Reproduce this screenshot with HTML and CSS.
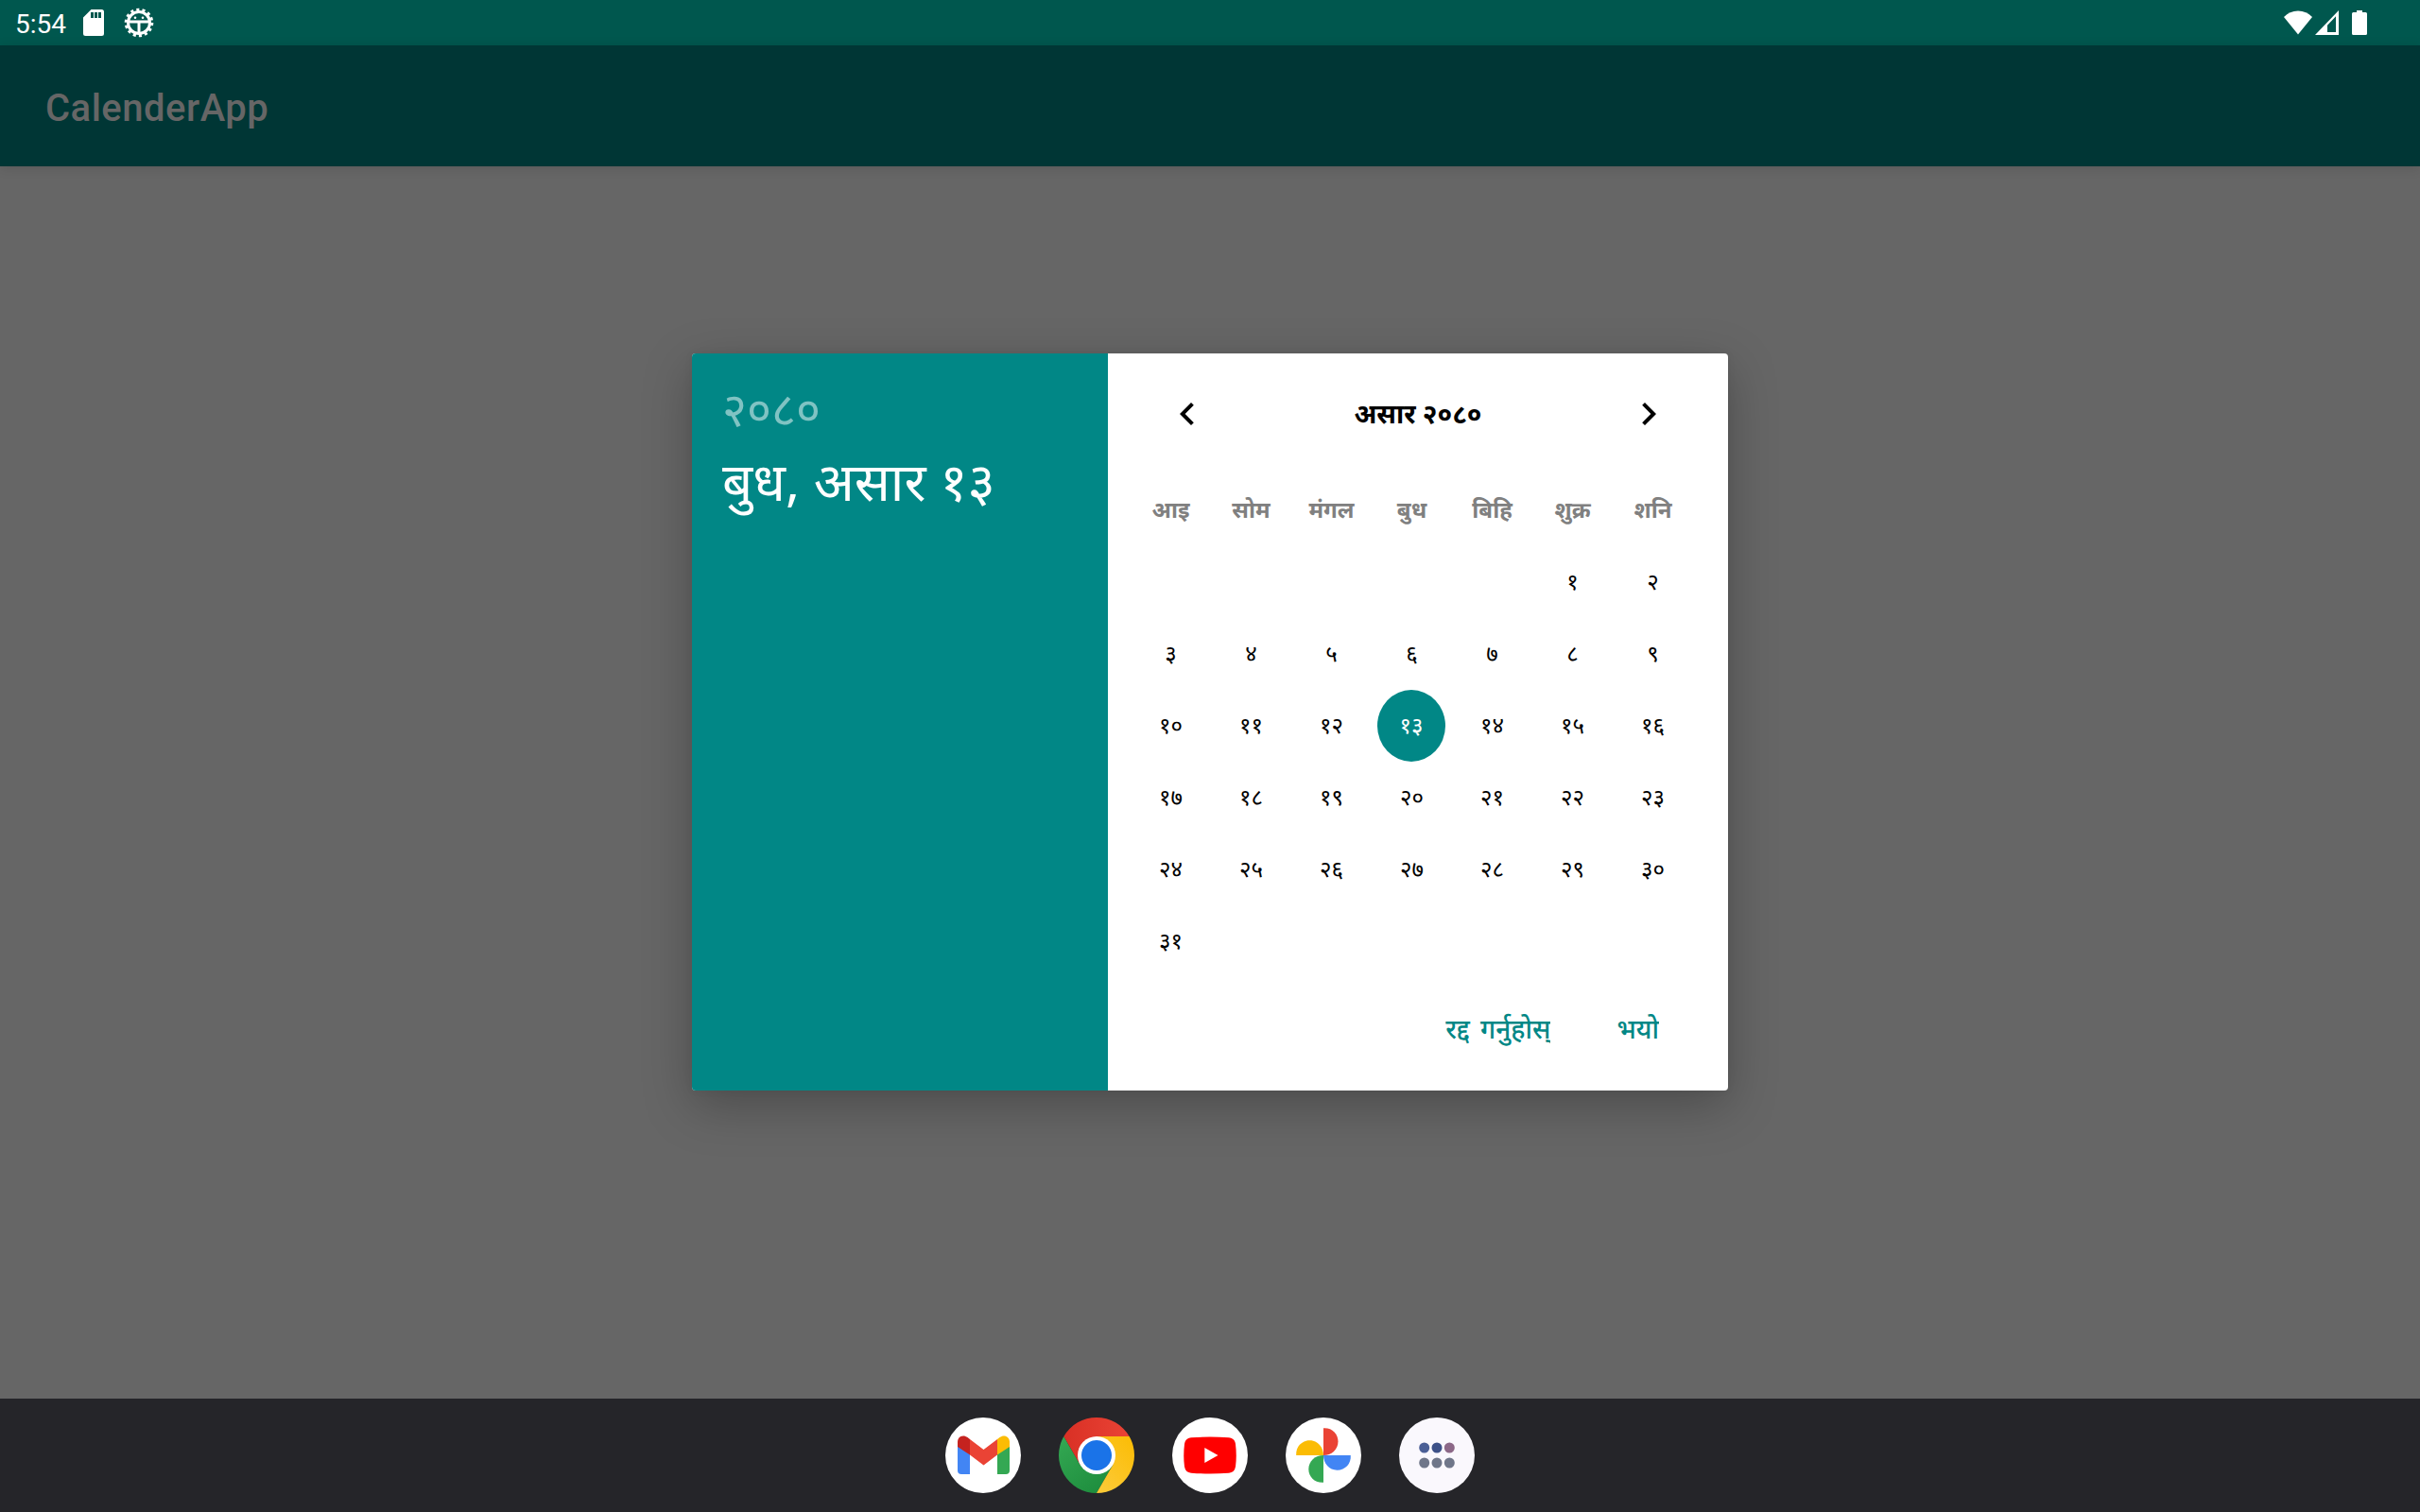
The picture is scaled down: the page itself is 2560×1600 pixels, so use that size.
FILE: index.html
```html
<!DOCTYPE html>
<html lang="en">
<head>
<meta charset="utf-8">
<title>CalenderApp</title>
<link rel="stylesheet" href="styles.css">
</head>
<body>
<div class="screen">
  <header class="status-bar">
    <span class="clock">5:54</span>
    <svg class="icon-sd" width="22" height="28" viewBox="0 0 22 28"><path fill="#fff" fill-rule="evenodd" d="M8.500 0H19.500a2.500 2.500 0 0 1 2.500 2.500V25.500a2.500 2.500 0 0 1-2.500 2.500H2.500A2.500 2.500 0 0 1 0 25.500V8.500ZM8 3V9h3V3ZM12 3V9h3V3ZM16 3V9h3V3Z"/></svg>
    <svg class="icon-bug" width="32" height="32" viewBox="-16 -16 32 32"><circle r="11.500" fill="none" stroke="#fff" stroke-width="3"/><circle r="13.600" fill="none" stroke="#fff" stroke-width="3.400" stroke-dasharray="3.050 3.050"/><path d="M-11-1H11M0-1V12" stroke="#fff" stroke-width="3"/><circle cx="-4" cy="-5.300" r="1.300" fill="#fff"/><circle cx="4" cy="-5.300" r="1.300" fill="#fff"/></svg>
    <div class="system-icons">
      <svg width="30" height="26" viewBox="0 0 30 26"><path fill="#fff" d="M15 25.500L0 7Q6 .5 15 .5T30 7Z"/></svg>
      <svg class="icon-signal" width="25" height="26" viewBox="0 0 25 26"><path fill="#fff" fill-rule="evenodd" d="M0 26L25 0V26ZM13 15.800V23H22V6.300Z"/></svg>
      <svg class="icon-battery" width="16" height="26" viewBox="0 0 16 26"><path fill="#fff" d="M5 0H11V2H14.500Q16 2 16 3.500V24.500Q16 26 14.500 26H1.500Q0 26 0 24.500V3.500Q0 2 1.500 2H5Z"/></svg>
    </div>
  </header>
  <div class="app-bar"><h1 class="app-title">CalenderApp</h1></div>
  <main class="content">
    <section class="dialog">
      <div class="summary">
        <div class="year">२०८०</div>
        <div class="date">बुध, असार १३</div>
      </div>
      <div class="picker">
        <div class="month-bar">
          <svg class="chevron" viewBox="0 0 24 24"><path d="M15.410 7.410L14 6l-6 6 6 6 1.410-1.410L10.830 12z"/></svg>
          <div class="month">असार २०८०</div>
          <svg class="chevron" viewBox="0 0 24 24"><path d="M10 6L8.590 7.410 13.170 12l-4.580 4.590L10 18l6-6z"/></svg>
        </div>
        <div class="grid">
          <b>आइ</b><b>सोम</b><b>मंगल</b><b>बुध</b><b>बिहि</b><b>शुक्र</b><b>शनि</b>
          <span></span><span></span><span></span><span></span><span></span><span>१</span><span>२</span>
          <span>३</span><span>४</span><span>५</span><span>६</span><span>७</span><span>८</span><span>९</span>
          <span>१०</span><span>११</span><span>१२</span><span class="selected">१३</span><span>१४</span><span>१५</span><span>१६</span>
          <span>१७</span><span>१८</span><span>१९</span><span>२०</span><span>२१</span><span>२२</span><span>२३</span>
          <span>२४</span><span>२५</span><span>२६</span><span>२७</span><span>२८</span><span>२९</span><span>३०</span>
          <span>३१</span>
        </div>
        <div class="actions"><div class="action">रद्द गर्नुहोस्</div><div class="action">भयो</div></div>
      </div>
    </section>
  </main>
  <nav class="dock">
    <svg class="app" viewBox="0 0 80 80"><circle cx="40" cy="40" r="40" fill="#fff"/><path fill="#4285f4" d="M13 29L26 39V60H17a4 4 0 0 1-4-4Z"/><path fill="#34a853" d="M68 29L55 39V60H64a4 4 0 0 0 4-4Z"/><path fill="#c5221f" d="M13 31V26C13 20 19 17.500 23.500 21L26 23V39.500Z"/><path fill="#fbbc04" d="M68 31V26C68 20 62 17.500 57.500 21L55 23V39.500Z"/><path fill="#ea4335" d="M26 23L40.500 34 55 23V39.500L40.500 50.500 26 39.500Z"/></svg>
    <svg class="app" viewBox="0 0 80 80"><defs><linearGradient id="red" x1="0" x2="1"><stop stop-color="#d93025"/><stop offset="1" stop-color="#ea4335"/></linearGradient><linearGradient id="green" x1="0" y1="0" x2=".7" y2="1"><stop stop-color="#34a853"/><stop offset="1" stop-color="#1e8e3e"/></linearGradient><linearGradient id="yellow" x1="1" y1="0" x2=".3" y2="1"><stop stop-color="#fbbc04"/><stop offset="1" stop-color="#fcc934"/></linearGradient></defs><path fill="url(#green)" d="M5.360 20A40 40 0 0 0 40 80L57.320 50 40 40 22.680 50Z"/><path fill="url(#yellow)" d="M40 80A40 40 0 0 0 74.640 20H40V40L57.320 50Z"/><path fill="url(#red)" d="M5.360 20A40 40 0 0 1 74.640 20H40V40L22.680 50Z"/><circle cx="40" cy="40" r="20" fill="#fff"/><circle cx="40" cy="40" r="16" fill="#1a73e8"/></svg>
    <svg class="app" viewBox="0 0 80 80"><circle cx="40" cy="40" r="40" fill="#fff"/><path fill="red" d="M20 21.300Q40 19.700 60 21.300Q66 21.800 67 28Q68.500 40 67 52Q66 58.200 60 58.700Q40 60.300 20 58.700Q14 58.200 13 52Q11.500 40 13 28Q14 21.800 20 21.300Z"/><path fill="#fff" d="M34.300 32V48L48.500 40Z"/></svg>
    <svg class="app" viewBox="0 0 80 80"><circle cx="40" cy="40" r="40" fill="#fff"/><path fill="#ea4335" d="M40 11.200C49 10.500 55.500 17 55.500 25.500S48.500 40 40 40Z"/><path fill="#4285f4" d="M68.800 40C69.500 49 63 55.700 54.500 55.700S40 48.500 40 40Z"/><path fill="#34a853" d="M40 68.800C31 69.500 24.300 63 24.300 54.500S31.500 40 40 40Z"/><path fill="#fbbc04" d="M11.200 40C10.500 31 17 24.200 25.500 24.200S40 31.500 40 40Z"/></svg>
    <svg class="app" viewBox="0 0 80 80"><circle cx="40" cy="40" r="40" fill="#faf8fd"/><g fill="#6f7689"><circle cx="26.700" cy="32" r="5.500" fill="#4b5f96"/><circle cx="40" cy="32" r="5.500" fill="#3d5188"/><circle cx="53.300" cy="32" r="5.500" fill="#8c6888"/><circle cx="26.700" cy="48" r="5.500"/><circle cx="40" cy="48" r="5.500"/><circle cx="53.300" cy="48" r="5.500"/></g></svg>
  </nav>
</div>
</body>
</html>
```
FILE: styles.css
```css
* { box-sizing: border-box; }
body { margin: 0; font-family: "Noto Sans", "Noto Sans Devanagari", sans-serif; }
svg { display: block; flex: none; }
.screen { width: 2560px; height: 1600px; display: flex; flex-direction: column; overflow: hidden; background: #666; }
.status-bar { height: 48px; flex: none; display: flex; align-items: center; padding: 0 56px 0 16px; background: #00574e; }
.clock { width: 72px; font: 28px/48px Roboto, sans-serif; color: #fff; padding-top: 3px; white-space: nowrap; }
.icon-bug { margin-left: 21px; }
.system-icons { margin-left: auto; display: flex; align-items: center; }
.icon-signal { margin-left: 3px; }
.icon-battery { margin-left: 14px; }
.app-bar { position: relative; height: 128px; flex: none; display: flex; align-items: center; padding: 6px 48px 0; background: #003635; box-shadow: 0 2px 12px rgba(0, 0, 0, .12); }
.app-title { margin: 0; font: 500 40px/48px Roboto, sans-serif; color: #666; letter-spacing: .5px; }
.content { height: 1304px; flex: none; padding: 198px 732px 0; }
.dialog { width: 1096px; height: 780px; display: flex; border-radius: 4px; overflow: hidden; background: #fff; box-shadow: 0 16px 52px rgba(0, 0, 0, .26), 0 0 10px rgba(0, 0, 0, .05); }
.summary { width: 440px; flex: none; padding: 26px 32px; background: #018786; color: #fff; white-space: nowrap; }
.year { font-size: 50px; line-height: 64px; color: rgba(255, 255, 255, .5); }
.date { margin-top: 7px; font-size: 56.400px; line-height: 76px; }
.picker { width: 656px; display: flex; flex-direction: column; }
.month-bar { height: 128px; flex: none; display: flex; align-items: center; justify-content: space-between; padding: 0 60px; }
.chevron { width: 48px; height: 48px; }
.month { padding-bottom: 3px; font-size: 28px; font-weight: 700; line-height: 40px; }
.grid { display: grid; grid-template-columns: repeat(7, 85px); grid-auto-rows: 76px; padding-left: 24px; }
.grid > * { display: flex; align-items: center; justify-content: center; padding-bottom: 3px; font-size: 24px; }
.grid b { color: #808080; }
.grid .selected { color: #fff; background: #018786; border-radius: 50%; width: 72px; margin-left: 6px; }
.actions { display: flex; justify-content: flex-end; gap: 70px; padding: 34px 73px 0 0; font-size: 28px; font-weight: 500; line-height: 40px; word-spacing: 4px; color: #018786; }
.action { overflow: hidden; white-space: nowrap; }
.dock { height: 120px; flex: none; display: flex; align-items: center; justify-content: center; gap: 40px; background: #252529; }
.app { width: 80px; height: 80px; }
```
